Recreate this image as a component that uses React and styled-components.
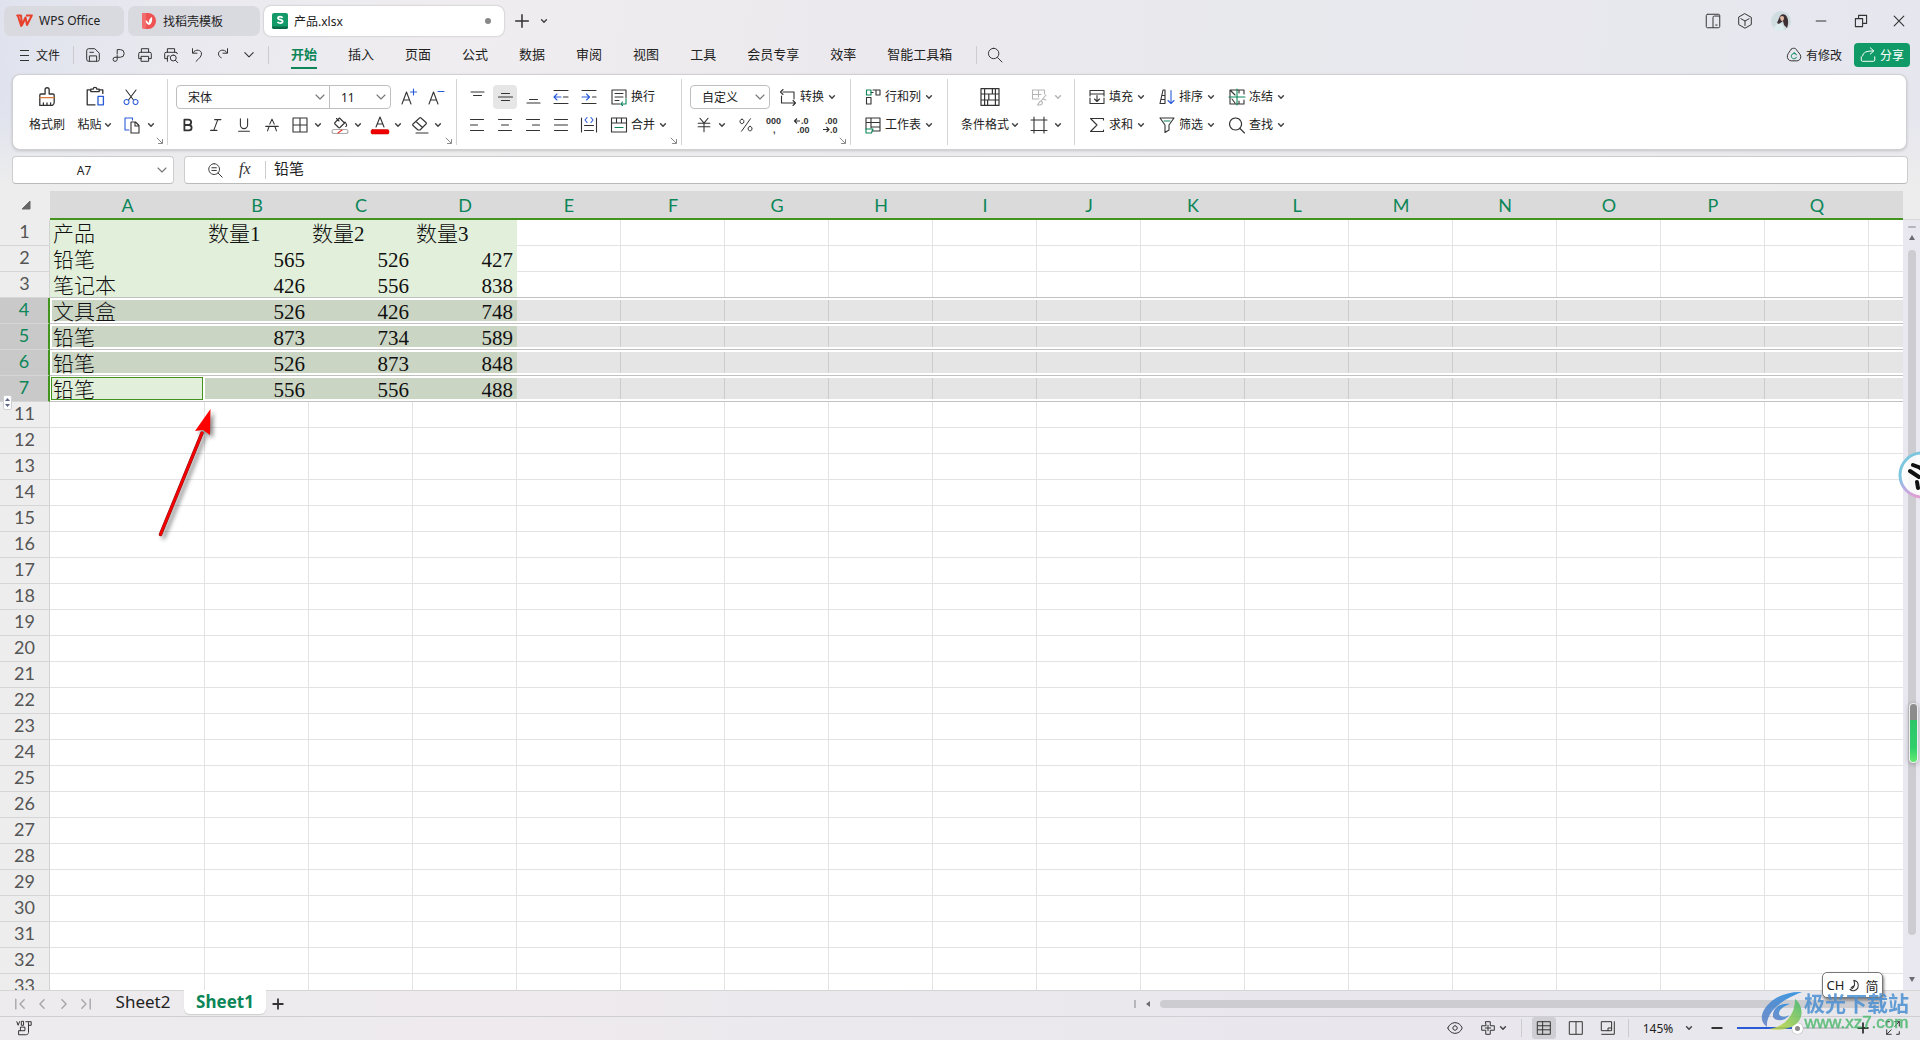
import React from "react";
import styled, { createGlobalStyle, css } from "styled-components";

const GREEN = "#0c8658";
const INK = "#333333";
const BLUE = "#2a5bd7";

const Global = createGlobalStyle`
  *, *::before, *::after { box-sizing: border-box; }
  html, body, #root { height: 100%; }
  body { margin: 0; overflow: hidden; background: #ededed; }
  body, button, input, select {
    font-family: "Noto Sans", "Noto Sans CJK SC", sans-serif;
    font-size: 12px;
    color: #222222;
  }
  button { border: 0; padding: 0; background: none; }
`;

/* ---------- shell ---------- */
const Shell = styled.div`
  position: relative;
  display: flex;
  flex-direction: column;
  height: 100vh;
  min-width: 1200px;
  overflow: hidden;
`;
const Top = styled.header`
  display: flex;
  flex-direction: column;
  height: 191px;
  flex: none;
  background: linear-gradient(180deg, rgba(237, 237, 237, 0) 60%, #ededed 98%),
    linear-gradient(95deg, #e0e3ee 0%, #e9e9ef 9%, #efedef 24%, #ece9ee 45%, #e8e9ed 66%, #e8e8ee 80%, #e6e6ef 100%);
`;
const TitleBar = styled.div`
  display: flex;
  align-items: center;
  height: 36px;
  padding: 5px 4px 0;
  gap: 4px;
`;
const DocTab = styled.button`
  display: flex;
  align-items: center;
  gap: 6px;
  height: 30px;
  width: ${(p) => p.$w}px;
  padding: 0 ${(p) => p.$px || 12}px;
  border-radius: 7px;
  background: ${(p) => (p.$active ? "#ffffff" : "#d9d9e0")};
  box-shadow: ${(p) => (p.$active ? "0 0 2px rgba(0,0,0,.3)" : "none")};
`;
const Dot = styled.i`
  width: 6px;
  height: 6px;
  border-radius: 50%;
  background: #888888;
  margin: 0 5px 0 auto;
`;
const Spacer = styled.div`flex: 1;`;
const WindowTools = styled.div`
  display: flex;
  align-items: center;
`;
const MenuBar = styled.div`
  display: flex;
  align-items: center;
  height: 38px;
  padding: 0 10px 0 20px;
`;
const FileButton = styled.button`
  display: flex;
  align-items: center;
  gap: 7px;
  margin-right: 7px;
`;
const Rule = styled.i`
  width: 1px;
  height: 18px;
  background: #cccccf;
  margin: 0 ${(p) => p.$m || 6}px;
`;
const Menu = styled.nav`
  display: flex;
  gap: 31px;
  margin: 0 22px 0 16px;
`;
const MenuItem = styled.button`
  font-size: 13px;
  height: 28px;
  line-height: 24px;
  padding: 1px 0 3px;
  white-space: nowrap;
  ${(p) =>
    p.$active &&
    css`
      color: ${GREEN};
      font-weight: 700;
      box-shadow: inset 0 -2px 0 ${GREEN};
    `}
`;
const TextButton = styled.button`
  display: flex;
  align-items: center;
  gap: 3px;
  margin-right: 12px;
  white-space: nowrap;
`;
const ShareButton = styled(TextButton)`
  height: 24px;
  padding: 0 6px 0 5px;
  margin: 0;
  border-radius: 4px;
  color: #ffffff;
  background: #109a68;
`;
const IconButton = styled.button`
  display: flex;
  align-items: center;
  justify-content: center;
  flex: none;
  width: ${(p) => p.$w || 28}px;
  height: 28px;
`;

/* ---------- ribbon ---------- */
const Ribbon = styled.div`
  display: flex;
  height: 76px;
  margin: 0 13px 0 12px;
  padding: 4px 0;
  flex: none;
  background: #ffffff;
  border: 1px solid #cfcfd4;
  border-radius: 8px;
  box-shadow: 0 1px 3px rgba(0, 0, 0, 0.16);
`;
const Group = styled.div`
  position: relative;
  display: flex;
  flex-direction: ${(p) => (p.$row ? "row" : "column")};
  width: ${(p) => (p.$w ? p.$w + "px" : "auto")};
  flex: none;
  padding: 4px 0 0 ${(p) => p.$pl || 6}px;
  border-right: ${(p) => (p.$last ? 0 : 1)}px solid #d4d4d4;
`;
const Line = styled.div`
  display: flex;
  align-items: center;
  height: 28px;
`;
const Stack = styled.div`
  display: flex;
  flex-direction: column;
  align-items: ${(p) => p.$align || "center"};
  width: ${(p) => p.$w}px;
`;
const Launcher = styled.button`
  position: absolute;
  right: 2px;
  bottom: -1px;
  width: 10px;
  height: 10px;
  line-height: 0;
`;
const ToolButton = styled.button`
  display: flex;
  align-items: center;
  justify-content: center;
  flex: none;
  width: 28px;
  height: 24px;
  border-radius: 4px;
  background: ${(p) => (p.$on ? "#e6e6e6" : "transparent")};
`;
const ToggleButton = styled(ToolButton)`
  width: 24px;
  margin: 0 2px;
`;
const SplitButton = styled.button`
  display: flex;
  align-items: center;
  width: ${(p) => p.$w || 40}px;
  height: 28px;
`;
const Box = styled.span`
  display: flex;
  justify-content: center;
  width: ${(p) => p.$w || 28}px;
`;
const LabelButton = styled.button`
  display: flex;
  align-items: center;
  gap: 2px;
  height: 28px;
  padding: 0 6px;
  line-height: 16px;
  white-space: nowrap;
  svg + span + svg { margin-left: 2px; }
`;
const CaptionButton = styled.button`
  display: flex;
  align-items: center;
  justify-content: center;
  gap: 2px;
  height: 28px;
  line-height: 16px;
  white-space: nowrap;
`;
const Picker = styled.label`
  display: grid;
  align-items: center;
  width: ${(p) => p.$w}px;
  height: 24px;
  border: 1px solid #bfbfbf;
  border-radius: ${(p) => p.$r || "4px"};
  margin-left: ${(p) => p.$ml || 0}px;
  > * { grid-area: 1 / 1; }
  > svg { justify-self: end; margin-right: 4px; pointer-events: none; }
`;
const Select = styled.select`
  appearance: none;
  width: 100%;
  height: 22px;
  padding: 0 0 0 11px;
  border: 0;
  background: transparent;
`;

/* ---------- formula bar ---------- */
const FormulaRow = styled.div`
  display: flex;
  gap: 10px;
  height: 28px;
  margin: 6px 12px 0 12px;
`;
const Field = styled.div`
  display: flex;
  align-items: center;
  width: ${(p) => (p.$w ? p.$w + "px" : "auto")};
  flex: ${(p) => (p.$w ? "none" : 1)};
  padding: 0 6px;
  background: #ffffff;
  border: 1px solid #cdcdd0;
  border-bottom-color: #b9bbb9;
  border-radius: 4px;
`;
const NameInput = styled.input`
  flex: 1;
  min-width: 0;
  border: 0;
  outline: 0;
  background: none;
  text-align: center;
  padding: 0 8px 0 0;
`;
const FormulaInput = styled.input`
  flex: 1;
  border: 0;
  outline: 0;
  background: none;
  padding: 0 0 4px;
  font-size: 15px;
  line-height: 20px;
`;

/* ---------- sheet ---------- */
const Body = styled.main`
  display: flex;
  flex: 1;
  min-height: 0;
`;
const Viewport = styled.div`
  position: relative;
  flex: 1;
  min-width: 0;
  overflow: hidden;
  background: #ffffff;
`;
const Sheet = styled.table`
  table-layout: fixed;
  width: ${(p) => p.$w}px;
  border-collapse: separate;
  border-spacing: 0;
`;
const Col = styled.col`width: ${(p) => p.$w}px;`;
const Corner = styled.th`
  height: 29px;
  padding: 0 19px 0 0;
  text-align: right;
  background: #ededed;
  line-height: 0;
`;
const ColHead = styled.th`
  height: 29px;
  padding: 1px 0 0;
  font: 400 18px/24px Lato, sans-serif;
  color: ${GREEN};
  background: #dadada;
  border-bottom: 2px solid #43931f;
`;
const RowHead = styled.th`
  height: 26px;
  padding: 0 0 3px;
  font: 400 18px/22px Lato, sans-serif;
  color: ${(p) => (p.$sel ? GREEN : "#555555")};
  background: ${(p) => (p.$sel ? "#c9c9c9" : "#ededed")};
  border-bottom: 1px solid #d6d6d6;
  border-right: ${(p) => (p.$sel ? "2px solid #43931f" : "1px solid #d2d2d2")};
`;
const lineRight = (c) => `linear-gradient(${c}, ${c}) right / 1px 100% no-repeat`;
const Cell = styled.td`
  height: 26px;
  padding: 0 4px 0 3px;
  overflow: hidden;
  white-space: nowrap;
  font: 400 21px/25px "Liberation Serif", "Noto Sans CJK SC", serif;
  font-weight: 300;
  color: #111111;
  text-align: ${(p) => (p.$num ? "right" : "left")};
  border-bottom: 1px solid ${(p) => (p.$edge ? "#c0c2c0" : p.$data ? "#e2efda" : "#e3e3e3")};
  background: ${(p) => (p.$data ? "#e2efda" : `${lineRight("#e3e3e3")} #ffffff`)};
  ${(p) =>
    p.$sel &&
    css`
      background: ${p.$data ? "#cbd5c4" : `${lineRight("#cccccc")} #e5e5e5`};
      box-shadow: inset ${p.$first ? 2 : 0}px 2px 0 #ffffff, inset 0 -2px 0 #ffffff;
    `}
  ${(p) =>
    p.$cursor &&
    css`
      background: #e2efda;
      box-shadow: inset 0 0 0 1px #ffffff, inset -2px 0 0 #ffffff, inset -3px 0 0 #43931f, inset 0 0 0 2px #43931f;
    `}
`;
const CellText = styled.div`
  height: 24px;
  line-height: 27px;
  overflow: hidden;
`;
const Expander = styled.button`
  position: absolute;
  left: 3px;
  top: 204px;
  width: 9px;
  height: 15px;
  background: #ffffff;
  border: 1px solid #cfcfd6;
  border-radius: 2px;
  line-height: 0;
`;
const Pointer = styled.svg`
  position: absolute;
  left: 150px;
  top: 208px;
  filter: drop-shadow(3px 3px 2px rgba(0, 0, 0, 0.45));
`;
const VBar = styled.div`
  display: flex;
  flex-direction: column;
  align-items: center;
  width: 17px;
  padding: 29px 0 7px;
  background: linear-gradient(#ededed 28px, #d9d9dc 28px, #d9d9dc 29px, #e9e8f0 29px);
  > svg { flex: none; }
`;
const VTrack = styled.div`
  flex: 1;
  width: 8px;
  margin: 8px 0 40px;
  border-radius: 4px;
  background: #cdccd1;
`;

/* ---------- footer ---------- */
const footBg = "linear-gradient(90deg, #edebee 0%, #eeeaee 25%, #e9e7ed 70%, #e7e7ec 100%)";
const SheetBar = styled.div`
  display: flex;
  align-items: center;
  flex: none;
  height: 26px;
  padding: 0 36px 0 9px;
  border-top: 1px solid #d5d5d5;
  background: ${footBg};
`;
const SheetNav = styled.div`
  display: flex;
  width: 93px;
`;
const SheetTab = styled.button`
  align-self: flex-start;
  height: 24px;
  width: 82px;
  margin-top: -1px;
  border-radius: 0 0 6px 6px;
  font-size: 17px;
  line-height: 24px;
  ${(p) =>
    p.$active &&
    css`
      color: ${GREEN};
      font-weight: 700;
      background: #ffffff;
      box-shadow: 0 1px 1px #cfcfcf;
    `}
`;
const HScroll = styled.div`
  display: flex;
  align-items: center;
  gap: 8px;
  width: 40%;
`;
const HMark = styled.i`
  width: 2px;
  height: 8px;
  background: #b6b6bb;
`;
const HTrack = styled.div`
  flex: 1;
  height: 8px;
  border-radius: 4px;
  background: #cdccd1;
`;
const StatusBar = styled.footer`
  display: flex;
  align-items: center;
  flex: none;
  height: 24px;
  padding: 0 7px 1px 10px;
  border-top: 1px solid #cfced2;
  background: ${footBg};
`;
const StatusButton = styled.button`
  display: flex;
  align-items: center;
  justify-content: center;
  gap: ${(p) => p.$gap || 0}px;
  height: 22px;
  width: ${(p) => p.$w || 32}px;
`;
const ViewButton = styled(StatusButton)`
  width: 24px;
  margin: 0 4px;
  border-radius: 3px;
  background: ${(p) => (p.$on ? "#cfcfd3" : "transparent")};
`;
const Zoom = styled.input`
  appearance: none;
  width: 112px;
  height: 12px;
  margin: 0 4px 0 6px;
  background: linear-gradient(90deg, ${BLUE} 50%, #c3c3c9 50%) center / 100% 2px no-repeat;
  &::-webkit-slider-thumb {
    appearance: none;
    width: 11px;
    height: 11px;
    border-radius: 50%;
    border: 3px solid #ffffff;
    background: #888888;
    box-shadow: 0 0 1px #777777;
  }
`;

/* ---------- floating items ---------- */
const Ime = styled.div`
  position: absolute;
  right: 37px;
  bottom: 42px;
  display: flex;
  align-items: center;
  justify-content: center;
  gap: 4px;
  width: 61px;
  height: 26px;
  font-size: 13px;
  background: #ffffff;
  border: 1px solid #777777;
  border-radius: 5px;
  box-shadow: 1px 2px 3px rgba(0, 0, 0, 0.5);
`;
const Watermark = styled.div`
  position: absolute;
  right: 11px;
  bottom: 8px;
  display: flex;
  align-items: center;
  gap: 1px;
  opacity: 0.85;
  pointer-events: none;
`;
const MarkText = styled.div`
  font: 700 21px/24px "Noto Sans CJK SC", sans-serif;
  color: #4a8fd2;
`;
const MarkUrl = styled.div`
  font: 400 17px/18px "Liberation Sans", sans-serif;
  color: #4cb86c;
  text-align: center;
  -webkit-text-stroke: 0.5px #4cb86c;
`;
const Assistant = styled.button`
  position: absolute;
  right: -26px;
  top: 451px;
  width: 48px;
  height: 48px;
  line-height: 0;
`;
const Meter = styled.div`
  position: absolute;
  right: 2px;
  top: 703px;
  width: 9px;
  height: 60px;
  border: 1px solid #eeeeee;
  border-radius: 4px;
  background: linear-gradient(#8c8c8c 27%, #2bc568 27%, #2fcf6b 75%, #63ea72);
  box-shadow: 0 1px 5px rgba(0, 0, 0, 0.3);
`;

/* ---------- icons ---------- */
const Svg = ({ s = 20, w, h, c = INK, sw = 1.1, vb, children }) => (
  <svg width={w || s} height={h || s} viewBox={vb || "0 0 20 20"} fill="none" stroke={c} strokeWidth={sw}
    strokeLinecap="round" strokeLinejoin="round" aria-hidden="true">{children}</svg>
);
const Caret = ({ c = "#444444" }) => (
  <Svg w={8} h={8} vb="0 0 8 8" c={c} sw={1.5}><path d="M1.6 2.8 4 5.2 6.4 2.8" /></Svg>
);
const Chevron = () => (
  <Svg w={10} h={10} vb="0 0 10 10" c="#777777" sw={1.1}><path d="M1 3l4 4 4-4" /></Svg>
);
const Corner45 = () => (
  <Svg w={8} h={8} vb="0 0 8 8" c="#888888" sw={1}><path d="M1 1l5 5M6.5 2.5v4h-4" /></Svg>
);
const P = ({ d, c = INK, sw = 1.1, ...rest }) => <Svg c={c} sw={sw} {...rest}><path d={d} /></Svg>;

const I = {
  wps: <Svg w={17} h={14} vb="0 0 17 14" c="#e8412b" sw={2}><path d="M1.2 1.5H5L6 11l3.5-7.5L11 11l4.8-9.5h-5M2 2l3.2 10" /></Svg>,
  docer: <svg width="15" height="16" viewBox="0 0 15 16" aria-hidden="true"><path d="M0 0h6a8 8 0 0 1 0 16H3a3 3 0 0 1-3-3z" fill="#ee5253" /><path d="M0 0v16h4V0z" fill="#f58080" opacity=".6" /><path d="M7 12C3.500 10.500 3.500 8 4 7l3 3c-.5-3 1-5 3-6 .5 3 0 7-3 8z" fill="#fff" /></svg>,
  sheet: <svg width="16" height="16" viewBox="0 0 16 16" aria-hidden="true"><rect width="16" height="16" rx="2" fill="#149a68" /><path d="M0 13.500h16V14a2 2 0 0 1-2 2H2a2 2 0 0 1-2-2z" fill="#0a6d47" /><path d="M10.500 4.800C9.800 3.400 6 3.200 6 5.200 6 7.300 10.600 6 10.600 8.600c0 2.200-4.200 2-5.100.3" stroke="#fff" strokeWidth="1.800" fill="none" /></svg>,
  burger: <Svg w={9} h={12} vb="0 0 9 12" sw={1}><path d="M0 1.500h9M0 6.500h9M0 11.500h9" /></Svg>,
  save: <P s={18} d="M3 5a2 2 0 0 1 2-2h7l5 5v7a2 2 0 0 1-2 2H5a2 2 0 0 1-2-2zM6 17v-6h8v6M6.500 7h4" />,
  export: <P s={18} d="M8 9V4h3.500a3.800 3.800 0 0 1 0 8.500H5.500a2.300 2.300 0 1 0 2.500 2.500V10.500" />,
  print: <P s={18} d="M6 7V3h8v4M6 14H3V8.500A1.500 1.500 0 0 1 4.500 7h11A1.500 1.500 0 0 1 17 8.500V14h-3M6 11.500h8V17H6z" />,
  preview: <P s={18} d="M6 7V3h8v4M6 14H3V8.500A1.500 1.500 0 0 1 4.500 7h11A1.500 1.500 0 0 1 17 8.500M6 17v-6h2M12.500 10a3.300 3.300 0 1 0 0 6.600 3.300 3.300 0 0 0 0-6.600M15 16l2.500 2.500" />,
  undo: <P s={18} d="M5 3v5h5M5.500 7.500c3-5 10-3 9.500 1.500-.3 3-3 5-6 8" />,
  redo: <P s={18} d="M15 3v5h-5M14.500 7.500c-3-5-10-3-9.500 1.500.3 2 1 3 3 4" />,
  search: <P s={18} d="M8.500 2.500a5.800 5.800 0 1 0 0 11.600 5.800 5.800 0 0 0 0-11.600M12.800 12.800l5 5" />,
  plus: <P s={18} sw={1.700} d="M10 3v14M3 10h14" />,
  side: <P s={18} d="M4 2.500h12a1.500 1.500 0 0 1 1.500 1.500v12a1.500 1.500 0 0 1-1.500 1.500H4A1.500 1.500 0 0 1 2.500 16V4A1.500 1.500 0 0 1 4 2.500M10 17V6a1.500 1.500 0 0 1 1.500-1.500H17M13 14.500h1.500" />,
  cube: <P s={18} d="M10 2l7 4v8l-7 4-7-4V6zM5.500 7.500L10 10l4.500-2.500M10 10v5" />,
  min: <P s={16} sw={1.400} d="M4 10h12" />,
  restore: <P s={16} sw={1.400} d="M3 7h9v10H3zM7 7V3h10v10h-5" />,
  close: <P s={16} sw={1.400} d="M4 4l12 12M16 4L4 16" />,
  cloud: <Svg s={18}><path d="M7 3.500c2-2 5-1 6 1 1 2 4 4 4.500 7 .3 3-2 5-4.500 5H7c-3 0-5-3-4.300-6C3.500 7.500 5.500 6 7 3.500" /><path d="M12.500 9.500a3 3 0 1 0 .3 3M10 7l2.500 2.500" stroke={GREEN} /></Svg>,
  share: <P s={18} c="#ffffff" d="M2.500 12v3.500a1.500 1.500 0 0 0 1.500 1.500h12a1.500 1.500 0 0 0 1.500-1.500V12M4 11c.5-4 4-5.500 12-5.500M12.500 2L16.500 5.500 12.500 9" />,
  brush: <Svg s={24}><path d="M4 8.500V17h10.500a3 3 0 0 0 1.500-3V8.500a1 1 0 0 0-1-1h-3.200V4a1.700 1.700 0 0 0-3.400 0v3.500H5a1 1 0 0 0-1 1M7 17v-2M10 17v-2M13 17v-2" /><path d="M4 10.500h12" stroke="#d9773c" /></Svg>,
  paste: <Svg s={24}><path d="M6 4H3.500v12.500H10M14 4h2.500v3M6.500 5.500V3.500h2a1.500 1.500 0 0 1 3 0h2v2z" /><path d="M12.500 9.500h4.500v7h-4.500z" stroke={BLUE} /></Svg>,
  cut: <Svg s={20}><path d="M5 3l7.500 10M15 3L7.500 13" /><path d="M5.500 12.500a2.500 2.500 0 1 0 .1 0M14.500 12.500a2.500 2.500 0 1 0 .1 0" stroke={BLUE} /></Svg>,
  copy: <Svg s={20}><path d="M7 15H3V3h7.500v2" stroke={BLUE} /><path d="M9 7h4.500L17 10.500V18H9zM13 7v4h4" /></Svg>,
  bigger: <Svg s={20}><path d="M4 17L8.500 5 13 17M5.500 13h6" /><path d="M12.500 5h6M15.500 2v6" stroke={BLUE} /></Svg>,
  smaller: <Svg s={20}><path d="M3 17L7.500 5 12 17M4.500 13h6" /><path d="M12 4.500h6" stroke={BLUE} /></Svg>,
  bold: <P s={18} sw={2} d="M6 4h4.500a3 3 0 0 1 0 6H6zM6 10h5a3 3 0 0 1 0 6H6z" />,
  italic: <P s={18} sw={1.200} d="M8.500 4h7M4 16h7M12 4L7.500 16" />,
  underline: <P s={18} sw={1.200} d="M6 3v7a4 4 0 0 0 8 0V3M4 17h12" />,
  strike: <P s={18} sw={1.200} d="M7.500 9L10 3.500 12.500 9M3 11.500h14M6.500 12.500L5 16.500M13.500 12.500L15 16.500" />,
  borders: <P s={20} d="M3 3h14v14H3zM10 3v14M3 10h14" />,
  bucket: <Svg s={20}><path d="M5 7.500l4.500-4.500 5 5-4.500 4.500a1 1 0 0 1-1.500 0L5 9a1 1 0 0 1 0-1.500M6.500 3.500L9 6M15 7c1.500 2 2.500 4 .8 4.500" /><rect x="2" y="14.500" width="16" height="4" rx="2" stroke="#aaa" /><path d="M8 18l4-3" stroke="#e33" /></Svg>,
  fontcolor: <Svg s={20}><path d="M6 12l4-10 4 10M7.300 9h5.400" /><rect x="1" y="14.500" width="18" height="4.500" rx="1.500" fill="#f00000" stroke="#c00000" strokeWidth=".5" /></Svg>,
  eraser: <P s={20} d="M8 15l-5-4.500a1 1 0 0 1 0-1.500l6.500-6a1 1 0 0 1 1.500 0l5 4.500a1 1 0 0 1 0 1.500L10 15zM6 6.500l6.500 6M6 18h12" />,
  top: <P d="M4 5h13M6.500 8.500h8" />,
  mid: <P d="M6.500 6.500h8M3.500 10h14M6.500 13.500h8" />,
  bot: <P d="M6.500 12.500h8M4 16h13" />,
  outdent: <Svg><path d="M3 3.500h14M12.500 10H17M3 16.500h14" /><path d="M3 10h7M6 7l-3 3 3 3" stroke={BLUE} /></Svg>,
  indent: <Svg><path d="M3 3.500h14M13.500 10H17M3 16.500h14" /><path d="M3 10h7M7.500 7l3 3-3 3" stroke={BLUE} /></Svg>,
  left: <P d="M3.500 4.500h13M3.500 10h7M3.500 15.500h13" />,
  center: <P d="M3.500 4.500h13M6.500 10h7M3.500 15.500h13" />,
  right: <P d="M3.500 4.500h13M9.500 10h7M3.500 15.500h13" />,
  justify: <P d="M3.500 4.500h13M3.500 10h13M3.500 15.500h13" />,
  distribute: <Svg><path d="M2.500 3v14M17.500 3v14M5.500 10.500h9M5.500 15.500h9" /><path d="M8 2.500L6 5l2 2.500M12 2.500L14 5l-2 2.500" stroke={BLUE} /></Svg>,
  wrap: <Svg><path d="M11 17H3V3h14v8M6 6.500h8M6 10h8M6 13.500h4" /><path d="M17 12v5h-5M13.500 15L12 17l1.500 1.500" stroke={GREEN} /></Svg>,
  merge: <Svg><path d="M2.500 3h15v14h-15zM2.500 8h15M7.500 3v5M12.500 3v5" /><path d="M6 12.500h8" stroke={GREEN} /></Svg>,
  convert: <P d="M5 5h11v7M5 2.500L2.500 5 5 7.500M3.500 9v7H17M15 13.500l2.500 2.500-2.500 2.500" />,
  yen: <P s={18} sw={1.200} d="M5.500 2.500L10 8l4.500-5.500M3.500 8h13M3.500 12h13M10 8v9.500" />,
  percent: <P s={18} d="M15 3L5 17M5.500 3.500c-3 0-3 5 0 5s3-5 0-5M14.500 11.500c-3 0-3 5 0 5s3-5 0-5" />,
  rowcol: <Svg><path d="M10 3h7v5h-4V3M3.500 10.500v6.500H8v-6.500zM8 5.500h2" /><path d="M3.500 3H8v5H3.500z" stroke={GREEN} /></Svg>,
  worksheet: <Svg><path d="M9 16h8V3H3v11M3 7.500h14M8 3v10M8 12h9" /><path d="M3 14h7l-1.500 4H3z" stroke={GREEN} /></Svg>,
  condfmt: <P s={24} sw={1} d="M5 3H2.500v14H5M15 3h2.500v14H15M5.500 3h9v14h-9zM2.500 7.500h15M2.500 12.500h15M9 7.500v5M12 3v4.500M8 12.500V17" />,
  tblstyle: <P c="#b5b5b5" d="M10 12H3.500V3h12v4M3.500 7.500H12M9.500 3v7M17 8l-5 6M12 14c-2 0-2 3-3.500 4 2.500 0 5 0 5-2.500zM14 12l3 1" />,
  cellfmt: <P d="M5 2v16M15 2v16M2 5h16M2 15.500h16" />,
  fill: <P d="M3 9V3.500h14V9M3 7h14M3 11v5.500h14V11M10 8.500v6M7.500 12L10 14.500 12.500 12" />,
  sort: <Svg><path d="M3 16.500L6 3h2v13.500zM5 8.500h3M4 12.500h4" /><path d="M14 3.500v13M11 13.500l3 3 3-3" stroke={BLUE} /></Svg>,
  freeze: <Svg><path d="M3 3h14M3 17h14M3 3v14M17 3v4M17 13v4M4 4l4 4M5 12l3 4M12 3v3M12 14v3" /><path d="M2 10h16M10 2v16" stroke={GREEN} /></Svg>,
  sum: <P d="M16.500 5V3.500h-13L10 10l-6.500 6.500h13V15" />,
  filter: <Svg><path d="M3 3h14l-5 7v5l-4 2.500V10z" /><path d="M7 6h6" stroke={GREEN} /></Svg>,
  zoomOut: <P s={18} d="M9 3a6 6 0 1 0 .1 0M13.500 13.500L18 18M6.500 7.500h5M6.500 10.500h5" />,
  first: <P s={14} c="#a5a5aa" sw={2} d="M4 3v14M16 4l-6 6 6 6" />,
  prev: <P s={14} c="#a5a5aa" sw={2} d="M13 4l-6 6 6 6" />,
  next: <P s={14} c="#a5a5aa" sw={2} d="M7 4l6 6-6 6" />,
  last: <P s={14} c="#a5a5aa" sw={2} d="M16 3v14M4 4l6 6-6 6" />,
  eye: <P s={18} d="M2 10c3-8 13-8 16 0-3 8-13 8-16 0M10 7.500a2.500 2.500 0 1 0 .1 0" />,
  cross: <P s={18} d="M7.500 3h5v4.500H17v5h-4.500V17h-5v-4.500H3v-5h4.500zM10 7v6M7 10h6" />,
  normal: <P s={18} d="M3 3h14v14H3zM3 7.500h14M8.500 3v14M3 12h14" />,
  page: <P s={18} d="M3 3h14v14H3zM10 3v14" />,
  reader: <P s={18} d="M3 3h11v10H3zM17 3v14H3M10 13v-3h4" />,
  full: <P s={18} d="M12 3h5v5M8 17H3v-5M17 3l-5 5M3 17l5-5M3 6V3h3M17 14v3h-3" />,
  macro: <P s={18} d="M2 3l1.500 4L5 3M7 3v4h2.500V3zM12 3h6v4h-3M15 4v11c0 2-2 2.500-3 2.500H4V13h7V9H6v4" />,
};

const Digits = ({ rows, arrow }) => (
  <svg width="20" height="20" viewBox="0 0 20 20" aria-hidden="true" fontFamily="Liberation Sans" fontSize="9" fontWeight="700" fill={INK}>
    <text x={rows[0][0]} y="9">{rows[0][1]}</text>
    <text x={rows[1][0]} y="17.500">{rows[1][1]}</text>
    {arrow && <path d={arrow} stroke={INK} fill="none" strokeWidth="1.200" />}
  </svg>
);
const Tri = ({ d }) => <svg width="8" height="8" viewBox="0 0 8 8" aria-hidden="true"><path d={d} fill="#6b6b70" /></svg>;

/* ---------- composed controls ---------- */
const Labelled = ({ icon, children, plain }) => (
  <LabelButton>{icon}<span>{children}</span>{!plain && <Caret />}</LabelButton>
);
const Split = ({ icon, w, box, label, caret }) => (
  <SplitButton $w={w} aria-label={label}><Box $w={box}>{icon}</Box><Caret c={caret} /></SplitButton>
);
const Tool = ({ icon, label }) => <ToolButton aria-label={label}>{icon}</ToolButton>;
const Launch = () => <Launcher aria-label="更多设置"><Corner45 /></Launcher>;
const Pick = ({ label, value, ...rest }) => (
  <Picker {...rest}><Select aria-label={label} defaultValue={value}><option>{value}</option></Select><Chevron /></Picker>
);

const columns = "ABCDEFGHIJKLMNOPQ".split("");
const data = {
  1: ["产品", "数量1", "数量2", "数量3"],
  2: ["铅笔", 565, 526, 427],
  3: ["笔记本", 426, 556, 838],
  4: ["文具盒", 526, 426, 748],
  5: ["铅笔", 873, 734, 589],
  6: ["铅笔", 526, 873, 848],
  7: ["铅笔", 556, 556, 488],
};
const rows = [1, 2, 3, 4, 5, 6, 7, ...Array.from({ length: 23 }, (_, i) => 11 + i)];
const menus = ["开始", "插入", "页面", "公式", "数据", "审阅", "视图", "工具", "会员专享", "效率", "智能工具箱"];

const cells = [...columns, ""];

const Grid = () => (
  <Sheet $w={50 + 155 + 104 * 17}>
    <colgroup>
      <Col $w={50} />
      {cells.map((c, i) => <Col key={c} $w={i === 0 ? 155 : 104} />)}
    </colgroup>
    <thead>
      <tr>
        <Corner><svg width="10" height="9" viewBox="0 0 10 9" aria-hidden="true"><path d="M9 0v8H1z" fill="#666" stroke="#666" strokeLinejoin="round" /></svg></Corner>
        {cells.map((c) => <ColHead key={c} scope="col">{c}</ColHead>)}
      </tr>
    </thead>
    <tbody>
      {rows.map((r) => {
        const sel = r >= 4 && r <= 7;
        return (
          <tr key={r}>
            <RowHead scope="row" $sel={sel}>{r}</RowHead>
            {cells.map((c, i) => {
              const v = data[r] && data[r][i];
              const has = v !== undefined;
              return (
                <Cell key={c} $sel={sel} $edge={r >= 3 && r <= 7} $data={has} $first={i === 0}
                  $num={typeof v === "number"} $cursor={r === 7 && i === 0}>
                  {has && <CellText>{v}</CellText>}
                </Cell>
              );
            })}
          </tr>
        );
      })}
    </tbody>
  </Sheet>
);

const RibbonBar = () => (
  <Ribbon>
    <Group $w={155} $row $pl={9}>
      <Stack $w={50}>
        <IconButton aria-label="格式刷">{I.brush}</IconButton>
        <CaptionButton>格式刷</CaptionButton>
      </Stack>
      <Stack $w={45}>
        <IconButton aria-label="粘贴">{I.paste}</IconButton>
        <CaptionButton>粘贴 <Caret /></CaptionButton>
      </Stack>
      <Stack $w={44} $align="flex-start">
        <IconButton aria-label="剪切">{I.cut}</IconButton>
        <Split icon={I.copy} w={42} box={30} label="复制" />
      </Stack>
      <Launch />
    </Group>
    <Group $w={289}>
      <Line>
        <Pick label="字体" value="宋体" $w={154} $ml={2} $r="4px 0 0 4px" />
        <Pick label="字号" value="11" $w={62} $ml={-1} $r="0 4px 4px 0" />
        <Spacer />
        <Tool icon={I.bigger} label="增大字号" />
        <Tool icon={I.smaller} label="减小字号" />
        <Box $w={6} />
      </Line>
      <Line>
        <Tool icon={I.bold} label="加粗" />
        <Tool icon={I.italic} label="倾斜" />
        <Tool icon={I.underline} label="下划线" />
        <Tool icon={I.strike} label="删除线" />
        <Split icon={I.borders} label="边框" />
        <Split icon={I.bucket} label="填充颜色" />
        <Split icon={I.fontcolor} label="字体颜色" />
        <Split icon={I.eraser} label="清除" />
      </Line>
      <Launch />
    </Group>
    <Group $w={225}>
      <Line>
        <Tool icon={I.top} label="顶端对齐" />
        <ToggleButton $on aria-label="垂直居中">{I.mid}</ToggleButton>
        <Tool icon={I.bot} label="底端对齐" />
        <Tool icon={I.outdent} label="减少缩进" />
        <Tool icon={I.indent} label="增加缩进" />
        <Labelled icon={I.wrap} plain>换行</Labelled>
      </Line>
      <Line>
        <Tool icon={I.left} label="左对齐" />
        <Tool icon={I.center} label="水平居中" />
        <Tool icon={I.right} label="右对齐" />
        <Tool icon={I.justify} label="两端对齐" />
        <Tool icon={I.distribute} label="分散对齐" />
        <Labelled icon={I.merge}>合并</Labelled>
      </Line>
      <Launch />
    </Group>
    <Group $w={169} $pl={8}>
      <Line>
        <Pick label="数字格式" value="自定义" $w={80} />
        <Box $w={2} />
        <Labelled icon={I.convert}>转换</Labelled>
      </Line>
      <Line>
        <Split icon={I.yen} w={42} label="货币" />
        <Tool icon={I.percent} label="百分比" />
        <Tool icon={<Digits rows={[[2, "000"], [9, ","]]} />} label="千位分隔" />
        <Tool icon={<Digits rows={[[9, ".0"], [5, ".00"]]} arrow="M8 6H2.500M5 3.500L2.500 6 5 8.500" />} label="增加小数位" />
        <Tool icon={<Digits rows={[[5, ".00"], [10, ".0"]]} arrow="M3 14.500h6M6.500 12L9 14.500 6.500 17" />} label="减少小数位" />
      </Line>
      <Launch />
    </Group>
    <Group $w={97}>
      <Labelled icon={I.rowcol}>行和列</Labelled>
      <Labelled icon={I.worksheet}>工作表</Labelled>
    </Group>
    <Group $w={127} $row $pl={12}>
      <Stack $w={60}>
        <IconButton aria-label="条件格式">{I.condfmt}</IconButton>
        <CaptionButton>条件格式 <Caret /></CaptionButton>
      </Stack>
      <Stack $w={48}>
        <Split icon={I.tblstyle} box={30} label="表格样式" caret="#b5b5b5" />
        <Split icon={I.cellfmt} box={30} label="单元格格式" />
      </Stack>
    </Group>
    <Group $last>
      <Line>
        <Labelled icon={I.fill}>填充</Labelled>
        <Labelled icon={I.sort}>排序</Labelled>
        <Labelled icon={I.freeze}>冻结</Labelled>
      </Line>
      <Line>
        <Labelled icon={I.sum}>求和</Labelled>
        <Labelled icon={I.filter}>筛选</Labelled>
        <Labelled icon={<P d="M8.500 3a6 6 0 1 0 .1 0M13 13.500l4.500 4.500" />}>查找</Labelled>
      </Line>
    </Group>
  </Ribbon>
);

export default function App() {
  return (
    <>
      <Global />
      <Shell>
        <Top>
          <TitleBar>
            <DocTab $w={120}>{I.wps}<span>WPS Office</span></DocTab>
            <DocTab $w={132} $px={14}>{I.docer}<span>找稻壳模板</span></DocTab>
            <DocTab $w={240} $px={8} $active>{I.sheet}<span>产品.xlsx</span><Dot /></DocTab>
            <IconButton $w={28} aria-label="新建">{I.plus}</IconButton>
            <Caret />
            <Spacer />
            <WindowTools>
              <IconButton $w={34} aria-label="侧栏">{I.side}</IconButton>
              <IconButton $w={30} aria-label="应用">{I.cube}</IconButton>
              <IconButton $w={42} aria-label="账户">
                <svg width="20" height="20" viewBox="0 0 20 20" aria-hidden="true">
                  <circle cx="10" cy="10" r="10" fill="#cfdde1" />
                  <path d="M9 5c2-3 6-2 7 1 2 4 1 8 0 11l-3-3-1-4-4 3-2-1z" fill="#3d3034" />
                  <path d="M9 6c2-2 4-1 4 1s-1 3-2 3-2-2-2-4z" fill="#e3b9a6" />
                  <path d="M3 17c2-5 7-5 9-3l1 5c-3 2-8 1-10-2z" fill="#dcecef" />
                </svg>
              </IconButton>
              <IconButton $w={38} aria-label="最小化">{I.min}</IconButton>
              <IconButton $w={42} aria-label="还原">{I.restore}</IconButton>
              <IconButton $w={34} aria-label="关闭">{I.close}</IconButton>
            </WindowTools>
          </TitleBar>
          <MenuBar>
            <FileButton>{I.burger}<span>文件</span></FileButton>
            <Rule />
            {[["save", "保存"], ["export", "输出"], ["print", "打印"], ["preview", "打印预览"], ["undo", "撤销"], ["redo", "恢复"]].map(([k, l]) => (
              <IconButton key={k} $w={26} aria-label={l}>{I[k]}</IconButton>
            ))}
            <IconButton $w={26} aria-label="更多"><P s={12} sw={1.800} d="M3 6l7 7 7-7" /></IconButton>
            <Rule />
            <Menu>
              {menus.map((m, i) => <MenuItem key={m} $active={i === 0}>{m}</MenuItem>)}
            </Menu>
            <Rule $m={2} />
            <IconButton $w={32} aria-label="搜索">{I.search}</IconButton>
            <Spacer />
            <TextButton>{I.cloud}<span>有修改</span></TextButton>
            <ShareButton>{I.share}<span>分享</span></ShareButton>
          </MenuBar>
          <RibbonBar />
          <FormulaRow>
            <Field $w={162}><NameInput aria-label="名称框" defaultValue="A7" /><Chevron /></Field>
            <Field>
              <Box $w={10} />
              <IconButton $w={28} aria-label="查看">{I.zoomOut}</IconButton>
              <IconButton $w={32} aria-label="插入函数">
                <svg width="16" height="18" viewBox="0 0 16 18" aria-hidden="true" fill={INK}>
                  <text x="2" y="13" fontFamily="Liberation Serif" fontStyle="italic" fontSize="16">fx</text>
                </svg>
              </IconButton>
              <Rule $m={4} />
              <Box $w={4} />
              <FormulaInput aria-label="编辑栏" defaultValue="铅笔" />
            </Field>
          </FormulaRow>
        </Top>
        <Body>
          <Viewport>
            <Grid />
            <Expander aria-label="展开隐藏行">
              <svg width="7" height="13" viewBox="0 0 7 13" aria-hidden="true"><path d="M1 5l2.500-3L6 5zM1 8h5l-2.500 3z" fill="#5d6585" /></svg>
            </Expander>
            <Pointer width="70" height="140" viewBox="0 0 70 140" aria-hidden="true">
              <path d="M10.500 135.500L52 34" stroke="#8c1414" strokeWidth="3.500" strokeLinecap="round" />
              <path d="M10.500 135.500L52 34" stroke="#f50000" strokeWidth="2.500" strokeLinecap="round" />
              <path d="M60.500 10L45 32l8-1 7 5z" fill="#ff0000" />
            </Pointer>
          </Viewport>
          <VBar>
            <Svg w={8} h={14} vb="0 0 8 14" c="#b6b5bb" sw={2}><path d="M1 7h6" /></Svg>
            <Tri d="M4 1l3 5H1z" />
            <VTrack />
            <Tri d="M4 7L1 2h6z" />
          </VBar>
        </Body>
        <SheetBar>
          <SheetNav>
            {[["first", "第一张"], ["prev", "上一张"], ["next", "下一张"], ["last", "最后一张"]].map(([k, l]) => (
              <StatusButton key={k} $w={22} aria-label={l}>{I[k]}</StatusButton>
            ))}
          </SheetNav>
          <SheetTab>Sheet2</SheetTab>
          <SheetTab $active>Sheet1</SheetTab>
          <StatusButton $w={24} aria-label="新建工作表"><P s={12} sw={3} d="M10 2v16M2 10h16" /></StatusButton>
          <Spacer />
          <HScroll>
            <HMark />
            <Tri d="M6 1v6L2 4z" />
            <HTrack />
          </HScroll>
        </SheetBar>
        <StatusBar>
          <StatusButton $w={28} aria-label="宏">{I.macro}</StatusButton>
          <Spacer />
          <StatusButton $w={32} aria-label="护眼">{I.eye}</StatusButton>
          <StatusButton $w={44} $gap={2} aria-label="阅读">{I.cross}<Caret /></StatusButton>
          <Rule $m={6} />
          <ViewButton $on aria-label="普通视图">{I.normal}</ViewButton>
          <ViewButton aria-label="分页预览">{I.page}</ViewButton>
          <ViewButton aria-label="阅读布局">{I.reader}</ViewButton>
          <Rule $m={4} />
          <StatusButton $w={70} $gap={12}><span>145%</span><Caret /></StatusButton>
          <StatusButton $w={28} aria-label="缩小"><P s={12} sw={3} d="M2 10h16" /></StatusButton>
          <Zoom type="range" aria-label="缩放" min="0" max="100" defaultValue="54" />
          <StatusButton $w={20} aria-label="放大"><P s={12} sw={3} d="M10 2v16M2 10h16" /></StatusButton>
          <StatusButton $w={40} aria-label="全屏">{I.full}</StatusButton>
        </StatusBar>
        <Meter />
        <Assistant aria-label="助手">
          <svg width="48" height="48" viewBox="0 0 48 48" aria-hidden="true">
            <defs><linearGradient id="ring" x1="0" y1="0" x2="0.300" y2="1"><stop offset="0.500" stopColor="#7cc7de" /><stop offset="0.750" stopColor="#b4aee6" /><stop offset="1" stopColor="#e0a0d4" /></linearGradient></defs>
            <circle cx="24" cy="24" r="22" fill="#ffffff" fillOpacity=".85" stroke="url(#ring)" strokeWidth="3" />
            <path d="M15 14l8 3M12 20l9 6M19 31l1 6M22 17l8 5" stroke="#111" strokeWidth="4" strokeLinecap="round" />
          </svg>
        </Assistant>
        <Ime><span>CH</span><P s={13} sw={1.600} d="M9 2c9 2 9 14 0 16-3 .5-5-1-6-2 5 0 9-6 6-14M10 10l-5 3" /><span>简</span></Ime>
        <Watermark>
          <svg width="42" height="40" viewBox="0 0 42 40" aria-hidden="true">
            <defs>
              <linearGradient id="swb" x1="1" y1="0" x2="0" y2="1"><stop offset="0" stopColor="#1f8be0" /><stop offset="1" stopColor="#5f7fc4" /></linearGradient>
              <linearGradient id="swg" x1="1" y1="0" x2="0" y2="1"><stop offset="0" stopColor="#3cb86c" /><stop offset="1" stopColor="#d8dc3c" /></linearGradient>
            </defs>
            <path d="M41 1C20 0 4 12 1 24c-1 5 1 9 5 12-1-10 6-24 35-35z" fill="url(#swb)" />
            <path d="M34 8c10 8 10 26-10 30-6 1-11 1-16 0 14-2 26-12 26-30z" fill="url(#swg)" />
            <path d="M29 13c-10-2-18 5-17 13 3 5 13 4 16-2-4 3-9 2-10-1 0-5 5-8 11-10z" fill="url(#swb)" />
          </svg>
          <div>
            <MarkText>极光下载站</MarkText>
            <MarkUrl>www.xz7.com</MarkUrl>
          </div>
        </Watermark>
      </Shell>
    </>
  );
}
